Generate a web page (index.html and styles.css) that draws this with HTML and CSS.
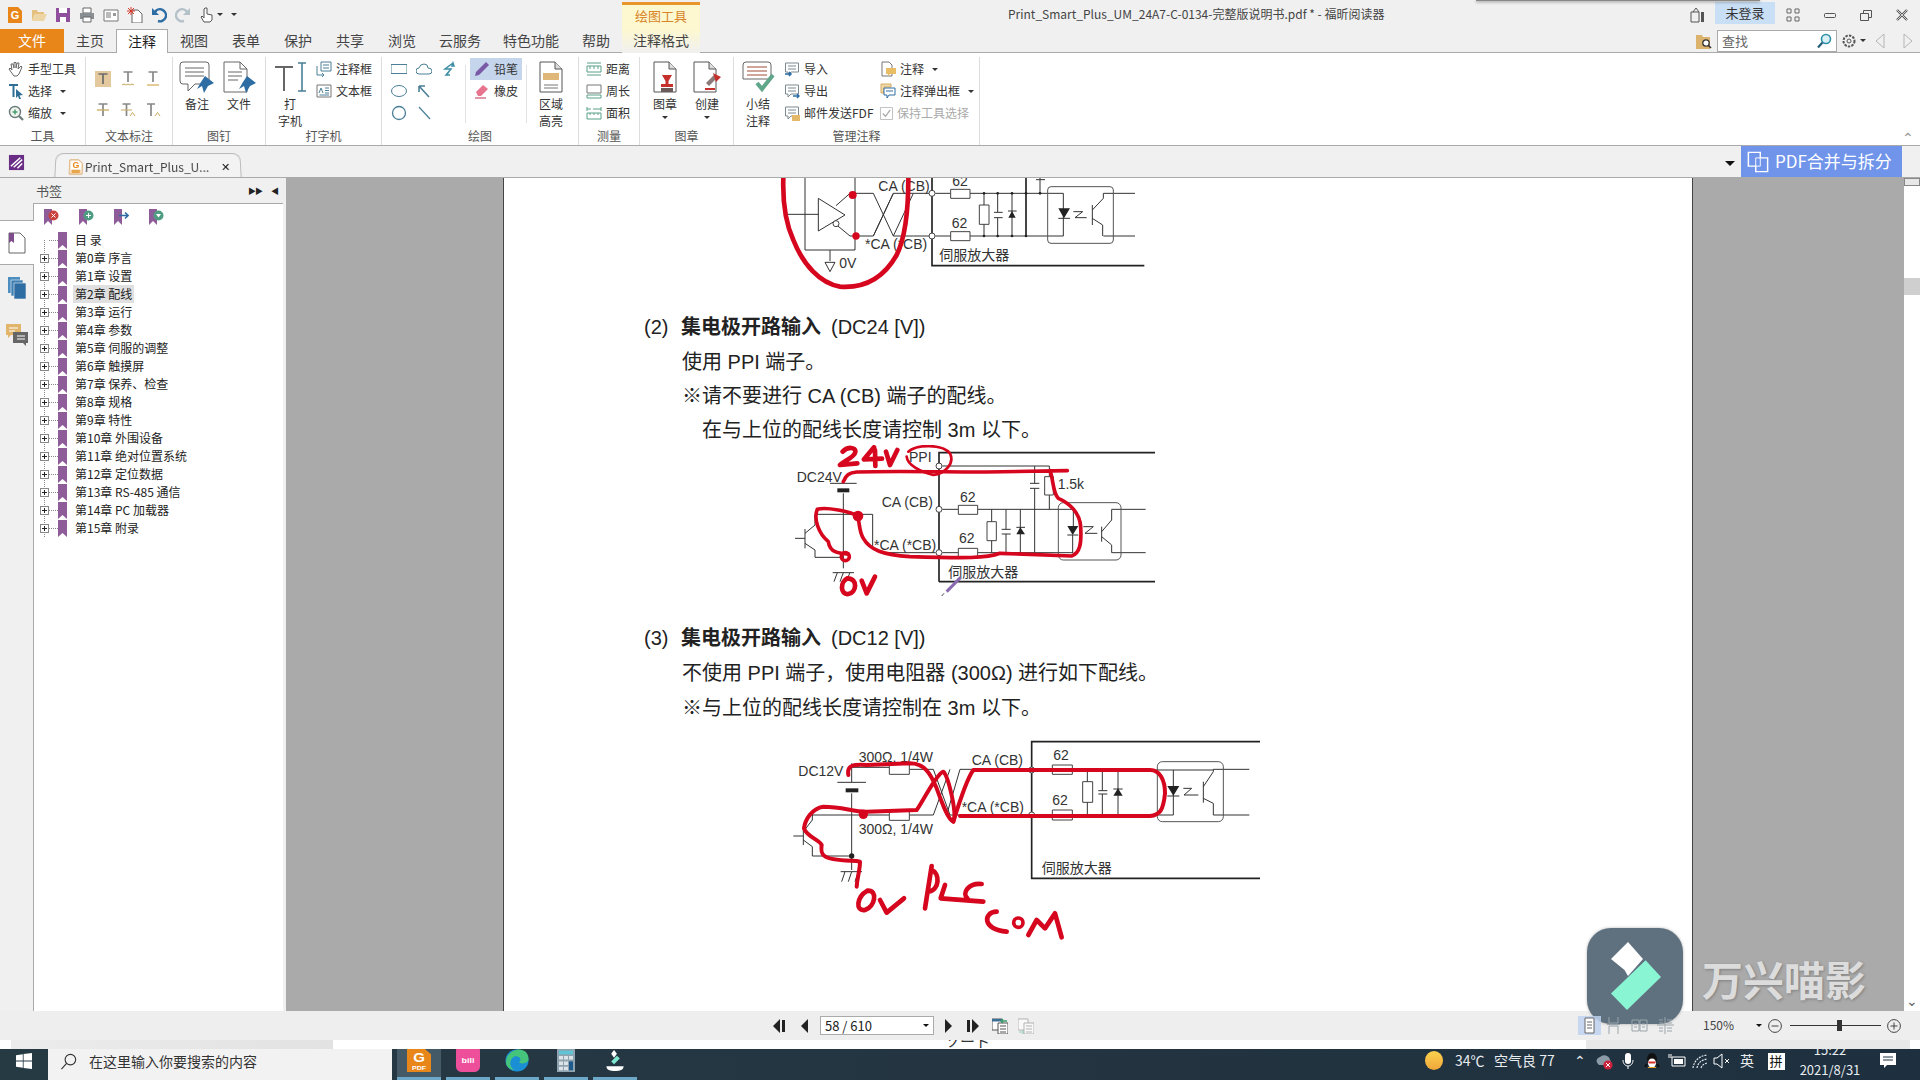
FILE: index.html
```html
<!DOCTYPE html>
<html lang="zh-CN">
<head>
  <meta charset="UTF-8">
  <title>Print_Smart_Plus_UM - 福昕阅读器</title>
  <link rel="stylesheet" href="styles.css">
</head>
<body>
  <svg class="defs" width="0" height="0">
    <symbol id="bm" viewBox="0 0 9 17"><path d="M0 0H9V17L4.5 13 0 17Z" fill="#8f5c9a"/></symbol>
    <symbol id="doc" viewBox="0 0 24 32"><path d="M1 1H16L23 8V31H1Z" fill="#fff" stroke="#555"/><path d="M16 1V8H23" fill="#ddd" stroke="#555"/></symbol>
    <symbol id="note" viewBox="0 0 16 16"><path d="M1.5 2H14.5V11H7L4 14V11H1.5Z" fill="#fff" stroke="#7b8a90"/><path d="M4 5H12M4 8H12" stroke="#7b8a90"/></symbol>
  </svg>

  <!-- title bar -->
  <header class="titlebar">
    <div class="quick">
      <svg class="ic" viewBox="0 0 16 16"><path d="M1 0H11L15 4V16H1Z" fill="#e8861a"/><text x="8" y="12" class="ic-g">G</text></svg>
      <svg class="ic" viewBox="0 0 16 16"><path d="M1 3H6L7 5H13V7H4L1 14Z" fill="#e5c181"/><path d="M4 7H16L13 14H1Z" fill="#edd5a6"/></svg>
      <svg class="ic" viewBox="0 0 16 16"><path d="M1 1H15V15H1Z" fill="#8f4f9c"/><path d="M4 1H12V6H4ZM5 10H11V15H5Z" fill="#fff"/></svg>
      <svg class="ic" viewBox="0 0 16 16"><path d="M4 1H12V6H4Z" fill="#fff" stroke="#666"/><path d="M1 6H15V12H1Z" fill="#8a8f93"/><path d="M4 10H12V15H4Z" fill="#fff" stroke="#666"/></svg>
      <svg class="ic" viewBox="0 0 16 16"><path d="M1 3H15V14H1Z" fill="#fff" stroke="#777"/><path d="M3 6H8M3 8H8M3 10H8" stroke="#777"/><path d="M10 6H13V9H10Z" fill="#999"/></svg>
      <svg class="ic" viewBox="0 0 16 16"><path d="M5 3H11L15 7V16H5Z" fill="#fff" stroke="#666"/><path d="M4 0V8M0 4H8M1 1L7 7M7 1L1 7" stroke="#d23a2c"/></svg>
      <svg class="ic" viewBox="0 0 16 16"><path d="M4 5A6 6 0 1 1 7 14" fill="none" stroke="#2d6da3" stroke-width="2.4"/><path d="M1 1V8H8Z" fill="#2d6da3"/></svg>
      <svg class="ic" viewBox="0 0 16 16"><path d="M12 5A6 6 0 1 0 9 14" fill="none" stroke="#b4c1c9" stroke-width="2.4"/><path d="M15 1V8H8Z" fill="#b4c1c9"/></svg>
      <svg class="ic" viewBox="0 0 16 16"><path d="M6 1H8V7L13 8V13L11 15H5L2 10 3 9 5 11V2Z" fill="#fff" stroke="#555"/></svg>
      <span class="caret caret-q"></span>
      <span class="caret caret-b"></span>
    </div>
    <div class="ctx-head">绘图工具</div>
    <div class="doc-title">Print_Smart_Plus_UM_24A7-C-0134-完整版说明书.pdf * - 福昕阅读器</div>
    <div class="win-btns">
      <svg class="ic bag" viewBox="0 0 16 16"><path d="M2 5H10V15H2Z" fill="none" stroke="#555"/><path d="M4 5L7 1 10 5" fill="none" stroke="#555"/><path d="M12 5H15V15H12Z" fill="#555"/></svg>
      <span class="login">未登录</span>
      <svg class="ic grid-btn" viewBox="0 0 16 16"><path d="M2 2H6V6H2ZM10 2H14V6H10ZM2 10H6V14H2ZM10 10H14V14H10Z" fill="none" stroke="#666"/></svg>
      <svg class="ic win" viewBox="0 0 16 16"><rect x="2.5" y="6.5" width="11" height="4" rx="1" fill="none" stroke="#555"/></svg>
      <svg class="ic win" viewBox="0 0 16 16"><path d="M5.5 3.5H13.5V10.5H5.5Z" fill="none" stroke="#555"/><path d="M2.5 6.5H10.5V13.5H2.5Z" fill="#f0f0f0" stroke="#555"/></svg>
      <svg class="ic win" viewBox="0 0 16 16"><path d="M3 3L13 13M13 3L3 13" stroke="#555" stroke-width="2.4"/><path d="M3 3L13 13M13 3L3 13" stroke="#f0f0f0" stroke-width=".8"/></svg>
    </div>
  </header>

  <!-- menu tabs -->
  <nav class="tabs">
    <span class="tab tab-file">文件</span>
    <span class="tab">主页</span>
    <span class="tab tab-on">注释</span>
    <span class="tab">视图</span>
    <span class="tab">表单</span>
    <span class="tab">保护</span>
    <span class="tab">共享</span>
    <span class="tab">浏览</span>
    <span class="tab tab-3">云服务</span>
    <span class="tab tab-4">特色功能</span>
    <span class="tab">帮助</span>
    <span class="tab tab-ctx">注释格式</span>
    <div class="search-wrap">
      <svg class="ic" viewBox="0 0 16 16"><path d="M0 2H6L7 4H14V16H0Z" fill="#dcb36c"/><circle cx="10" cy="10" r="3.2" fill="#fff" stroke="#333" stroke-width="1.3"/><path d="M12 12L15 15" stroke="#333" stroke-width="1.6"/></svg>
      <div class="search"><span>查找</span>
        <svg class="ic" viewBox="0 0 16 16"><circle cx="10" cy="6" r="4.5" fill="#d9f0f5" stroke="#2f8fa8" stroke-width="1.6"/><path d="M6.5 9.5L2 14.5" stroke="#24607a" stroke-width="2.2"/></svg>
      </div>
      <svg class="ic gear" viewBox="0 0 16 16"><circle cx="8" cy="8" r="5.5" fill="none" stroke="#555" stroke-dasharray="2.4 1.2" stroke-width="2"/><circle cx="8" cy="8" r="2" fill="none" stroke="#555"/></svg>
      <span class="caret"></span>
      <svg class="ic tri" viewBox="0 0 16 16"><path d="M12 1L4 8 12 15Z" fill="none" stroke="#b5b5b5"/></svg>
      <svg class="ic tri" viewBox="0 0 16 16"><path d="M4 1L12 8 4 15Z" fill="none" stroke="#b5b5b5"/></svg>
    </div>
  </nav>

  <!-- ribbon -->
  <section class="ribbon">
    <div class="group g-tools">
      <div class="body rows">
        <div class="row"><svg class="ic" viewBox="0 0 16 16"><path d="M4 9L3 3 5 3 6 7 6 1.5H8V7L9 2H11L10 8 13 5 14 6 11 13 9 15H6L3 11 1 8 2 7Z" fill="#fff" stroke="#666"/></svg>手型工具</div>
        <div class="row"><svg class="ic" viewBox="0 0 16 16"><path d="M1 1H10V3H6.5V14H4.5V3H1Z" fill="#2f6f96"/><path d="M8 6L15 12 11.5 12.5 13 16 11 16 10 13 8 15Z" fill="#2f6f96"/></svg>选择<span class="caret"></span></div>
        <div class="row"><svg class="ic" viewBox="0 0 16 16"><circle cx="7" cy="7" r="5.5" fill="#eef5ee" stroke="#6b7a78" stroke-width="1.4"/><path d="M7 4.5V9.5M4.5 7H9.5" stroke="#4b9c72" stroke-width="1.5"/><path d="M11 11L15 15" stroke="#6b7a78" stroke-width="2.2"/></svg>缩放<span class="caret"></span></div>
      </div>
      <div class="label">工具</div>
    </div>

    <div class="group g-mark">
      <div class="body mark-grid">
        <svg class="ic ic-hl" viewBox="0 0 16 16"><path d="M0 0H16V16H0Z" fill="#e5c99e"/><path d="M3.5 3H12.5M8 3V13" stroke="#6c6c6c" stroke-width="1.7"/></svg>
        <svg class="ic" viewBox="0 0 16 16"><path d="M3.5 1H12.5M8 1V11" stroke="#888" stroke-width="1.7"/><path d="M2 14L4 13 6 14 8 13 10 14 12 13 14 14" fill="none" stroke="#c9a95e"/></svg>
        <svg class="ic" viewBox="0 0 16 16"><path d="M3.5 1H12.5M8 1V11" stroke="#888" stroke-width="1.7"/><path d="M2 14H14" stroke="#d6b15c" stroke-width="1.3"/></svg>
        <svg class="ic" viewBox="0 0 16 16"><path d="M3.5 2H12.5M8 2V14" stroke="#888" stroke-width="1.7"/><path d="M2 8H14" stroke="#c9a95e" stroke-width="1.3"/></svg>
        <svg class="ic" viewBox="0 0 16 16"><path d="M2.5 2H10.5M6.5 2V14" stroke="#888" stroke-width="1.7"/><path d="M1 8H12" stroke="#c9a95e"/><path d="M10 14L12.5 10.5 15 14" fill="none" stroke="#c9a95e"/></svg>
        <svg class="ic" viewBox="0 0 16 16"><path d="M2 2H10M6 2V14" stroke="#888" stroke-width="1.7"/><path d="M10 14L12.5 10.5 15 14" fill="none" stroke="#c9a95e"/></svg>
      </div>
      <div class="label">文本标注</div>
    </div>

    <div class="group g-pin">
      <div class="body cols">
        <div class="big w42">
          <svg class="big-ic" viewBox="0 0 36 32"><path d="M4 1H27Q30 1 30 4V20Q30 23 27 23H16L9 30V23H4Q1 23 1 20V4Q1 1 4 1Z" fill="#fff" stroke="#666"/><path d="M6 7H25M6 11H25M6 15H25" stroke="#666"/><path d="M26 15L35 22 29 25 25 32 23 25 18 28 22 21Z" fill="#2d6da3"/></svg>
          <span>备注</span>
        </div>
        <div class="big w42">
          <svg class="big-ic" viewBox="0 0 36 32"><path d="M3 1H19L26 8V31H3Z" fill="#fff" stroke="#666"/><path d="M19 1V8H26" fill="none" stroke="#666"/><path d="M7 11H21M7 15H21M7 19H17" stroke="#666"/><path d="M26 15L35 22 29 25 25 32 23 25 18 28 22 21Z" fill="#2d6da3"/></svg>
          <span>文件</span>
        </div>
      </div>
      <div class="label">图钉</div>
    </div>

    <div class="group g-type">
      <div class="body cols">
        <div class="big w48">
          <svg class="big-ic" viewBox="0 0 36 32"><path d="M3 6H21M12 6V30" stroke="#666" stroke-width="2"/><path d="M26 2H34M26 30H34M30 2V30" stroke="#4b7f97" stroke-width="1.6"/></svg>
          <span>打</span><span>字机</span>
        </div>
        <div class="rows col-type">
          <div class="row"><svg class="ic" viewBox="0 0 16 16"><path d="M5 1H15V10H5Z" fill="#fff" stroke="#4b7f97"/><path d="M7 4H13M7 7H13" stroke="#4b7f97"/><path d="M1 5V14H8M6 12L8 14 6 16" fill="none" stroke="#4b7f97"/></svg>注释框</div>
          <div class="row"><svg class="ic" viewBox="0 0 16 16"><path d="M1 2H15V14H1Z" fill="#fff" stroke="#777"/><path d="M3 10L5 5 7 10M9 5H13M9 7.5H13M9 10H13M3.5 12H13" fill="none" stroke="#4b7f97"/></svg>文本框</div>
        </div>
      </div>
      <div class="label">打字机</div>
    </div>

    <div class="group g-draw">
      <div class="body cols">
        <div class="shape-grid">
          <svg class="ic" viewBox="0 0 16 16"><path d="M0 3.5H16V12.5H0Z" fill="#fff" stroke="#4b7f97"/></svg>
          <svg class="ic" viewBox="0 0 16 16"><path d="M3 13Q0 13 0 10 0 7 3 7 4 3 8 3 12 3 12 7 16 7 16 10 16 13 13 13Z" fill="#fff" stroke="#4b7f97"/></svg>
          <svg class="ic" viewBox="0 0 16 16"><path d="M12 2L4 8H10L5 14M8 11L5 14 9 14M12 2L11 5 13 5Z" fill="none" stroke="#3f8fa5" stroke-width="1.5"/></svg>
          <svg class="ic" viewBox="0 0 16 16"><ellipse cx="8" cy="8" rx="7.5" ry="5.5" fill="#fff" stroke="#4b7f97"/></svg>
          <svg class="ic" viewBox="0 0 16 16"><path d="M13 14L3 3M3 3H9M3 3V9" fill="none" stroke="#4b7f97" stroke-width="1.6"/></svg>
          <span></span>
          <svg class="ic" viewBox="0 0 16 16"><circle cx="8" cy="8" r="6.5" fill="#fff" stroke="#4b7f97" stroke-width="1.3"/></svg>
          <svg class="ic" viewBox="0 0 16 16"><path d="M3 2L14 14" stroke="#4b7f97" stroke-width="1.2"/></svg>
        </div>
        <div class="vsep"></div>
        <div class="rows col-pen">
          <div class="row row-on"><svg class="ic" viewBox="0 0 16 16"><path d="M2 11L12 1 15 4 5 14 1 15Z" fill="#7a5aa6"/></svg>铅笔</div>
          <div class="row"><svg class="ic" viewBox="0 0 16 16"><path d="M2 9L9 2 14 6 7 13H4Z" fill="#e8738e"/><path d="M1 15H12" stroke="#c9516d" stroke-width="1.2"/></svg>橡皮</div>
        </div>
        <div class="vsep vsep-r"></div>
        <div class="big w48">
          <svg class="big-ic" viewBox="0 0 24 32"><use href="#doc"/><path d="M4 12H20V19H4Z" fill="#dfb879"/><path d="M5 24H19M5 27H19" stroke="#777"/></svg>
          <span>区域</span><span>高亮</span>
        </div>
      </div>
      <div class="label">绘图</div>
    </div>

    <div class="group g-meas">
      <div class="body rows">
        <div class="row"><svg class="ic" viewBox="0 0 16 16"><path d="M1 5H15V11H1Z" fill="#fff" stroke="#5aa089"/><path d="M1 2H15M1 14H15M4 5V8M8 5V8M12 5V8" stroke="#5aa089"/></svg>距离</div>
        <div class="row"><svg class="ic" viewBox="0 0 16 16"><path d="M1 2H15V10H1Z" fill="#fff" stroke="#777"/><path d="M1 12H15V15H1Z" fill="#fff" stroke="#5aa089"/></svg>周长</div>
        <div class="row"><svg class="ic" viewBox="0 0 16 16"><path d="M1 8H15V14H1Z" fill="#fff" stroke="#5aa089"/><path d="M1 4H5M7 4H15M1 2V6M15 2V6M4 8V10M8 8V10M12 8V10" stroke="#5aa089"/></svg>面积</div>
      </div>
      <div class="label">测量</div>
    </div>

    <div class="group g-stamp">
      <div class="body cols">
        <div class="big w42">
          <svg class="big-ic" viewBox="0 0 24 32"><use href="#doc"/><path d="M9 14H19L15.5 20V23H20V26H8V23H12.5V20Z" fill="#c52f2c"/><path d="M8 27H20V31H8Z" fill="#6b5b58"/></svg>
          <span>图章</span><span class="caret caret-big"></span>
        </div>
        <div class="big w42">
          <svg class="big-ic" viewBox="0 0 30 32"><g transform="translate(1)"><use href="#doc" width="24" height="32"/></g><path d="M14 22L22 14 25 17 17 25Z" fill="#8c7a78"/><path d="M21 12L29 16 24 21Z" fill="#c52f2c"/><path d="M13 28H23" stroke="#c52f2c" stroke-width="2"/></svg>
          <span>创建</span><span class="caret caret-big"></span>
        </div>
      </div>
      <div class="label">图章</div>
    </div>

    <div class="group g-manage">
      <div class="body cols">
        <div class="big w48">
          <svg class="big-ic" viewBox="0 0 32 32"><path d="M4 1H26Q29 1 29 4V18H1V4Q1 1 4 1Z" fill="#fff" stroke="#666"/><path d="M5 6H25M5 10H25M5 14H25" stroke="#a04a38"/><path d="M15 22L20 28 31 14" fill="none" stroke="#5fa68a" stroke-width="4"/></svg>
          <span>小结</span><span>注释</span>
        </div>
        <div class="rows col-io">
          <div class="row"><svg class="ic" viewBox="0 0 16 16"><use href="#note"/><path d="M1 13H7M5 11L7 13 5 15" fill="none" stroke="#2d6da3" stroke-width="1.5"/></svg>导入</div>
          <div class="row"><svg class="ic" viewBox="0 0 16 16"><use href="#note"/><path d="M9 13H15M13 11L15 13 13 15" fill="none" stroke="#2d6da3" stroke-width="1.5"/></svg>导出</div>
          <div class="row"><svg class="ic" viewBox="0 0 16 16"><use href="#note"/><path d="M8 10H16V16H8Z" fill="#e3b868"/></svg>邮件发送FDF</div>
        </div>
        <div class="rows col-note">
          <div class="row"><svg class="ic" viewBox="0 0 16 16"><path d="M2 1H9L12 4V15H2Z" fill="#fff" stroke="#777"/><path d="M6 7H16V13H10L8 15V13H6Z" fill="#e9bd64"/></svg>注释<span class="caret"></span></div>
          <div class="row"><svg class="ic" viewBox="0 0 16 16"><path d="M1 1H11V4H4V10H1Z" fill="#f0d9a8" stroke="#d3ad62"/><path d="M4 5H15V12H9L7 15V12H4Z" fill="#fff" stroke="#2d6da3"/><path d="M6 8H13" stroke="#2d6da3"/></svg>注释弹出框<span class="caret"></span></div>
          <div class="row row-off"><svg class="ic ic-chk" viewBox="0 0 14 14"><path d="M.5.5H13.5V13.5H.5Z" fill="#fff" stroke="#bbb"/><path d="M3 7L6 10 11 3" fill="none" stroke="#aaa" stroke-width="1.4"/></svg>保持工具选择</div>
        </div>
      </div>
      <div class="label">管理注释</div>
    </div>
    <span class="chev-up">&#8963;</span>
  </section>

  <!-- document tab strip -->
  <div class="docstrip">
    <svg class="ic sign" viewBox="0 0 18 18"><path d="M1 1H17V17H1Z" fill="#6a2d86"/><path d="M3 13L13 4M6 14L15 6M10 15L15 10" stroke="#fff" stroke-width="1.6"/></svg>
    <div class="doctab">
      <svg class="ic" viewBox="0 0 16 18"><path d="M1 1H11L15 5V17H1Z" fill="#fff" stroke="#d69a4a"/><path d="M3 12H13V16H3Z" fill="#e8a64a"/><text x="8" y="10" class="ic-g ic-g-o">G</text></svg>
      <span class="doctab-name">Print_Smart_Plus_U...</span>
      <span class="doctab-x">✕</span>
    </div>
    <span class="caret caret-blk"></span>
    <div class="merge">
      <svg class="merge-ic" viewBox="0 0 24 24"><path d="M1.5 1.5H14.5V7.5H22.5V22.5H9.5V16.5H1.5Z" fill="none" stroke="#fff" stroke-width="1.6"/><path d="M9.5 7.5H14.5V16.5H9.5Z" fill="none" stroke="#fff"/></svg>
      PDF合并与拆分
    </div>
  </div>

  <!-- main area -->
  <main class="main">
    <aside class="rail">
      <div class="rail-tab">
        <svg class="rail-ic" viewBox="0 0 18 22"><path d="M1 1H12L17 6V21H1Z" fill="#fff" stroke="#666"/><path d="M1 1H6V11L3.5 9 1 11Z" fill="#7d4d8c"/></svg>
      </div>
      <svg class="rail-ic rail-pages" viewBox="0 0 18 22"><path d="M0 0H12V16H0Z" fill="#4d8ec0"/><path d="M3 3H15V19H3Z" fill="#3f80b5" stroke="#f0f0f0" stroke-width=".6"/><path d="M6 6H18V22H6Z" fill="#2d6da3" stroke="#f0f0f0" stroke-width=".6"/></svg>
      <svg class="rail-ic rail-notes" viewBox="0 0 22 22"><path d="M0 0H15V11H5L2 14V11H0Z" fill="#e2b56c"/><path d="M3 4H12M3 7H9" stroke="#fff"/><path d="M7 8H22V19H20V22L17 19H7Z" fill="#666"/><path d="M11 12H19M11 15H19" stroke="#fff"/></svg>
    </aside>

    <div class="bookmarks">
      <div class="bm-head"><span>书签</span><span class="bm-ctrl"><span>&#9654;&#9654;</span><span>&#9664;</span></span></div>
      <div class="bm-panel">
        <div class="bm-tools">
          <svg class="ic" viewBox="0 0 16 16"><path d="M1 0H9V16L5 12 1 16Z" fill="#8f5c9a"/><circle cx="10.5" cy="6.5" r="5" fill="#c9443e"/><path d="M8.5 4.5L12.5 8.5M12.5 4.5L8.5 8.5" stroke="#fff"/></svg>
          <svg class="ic" viewBox="0 0 16 16"><path d="M1 0H9V16L5 12 1 16Z" fill="#8f5c9a"/><circle cx="10.5" cy="6.5" r="5" fill="#4e9d82"/><path d="M10.5 4V9M8 6.5H13" stroke="#fff"/></svg>
          <svg class="ic" viewBox="0 0 16 16"><path d="M1 0H9V16L5 12 1 16Z" fill="#8f5c9a"/><path d="M6 6.5H15M12 3.5L15 6.5 12 9.5" fill="none" stroke="#2d6da3" stroke-width="1.6"/></svg>
          <svg class="ic" viewBox="0 0 16 16"><path d="M1 0H9V16L5 12 1 16Z" fill="#8f5c9a"/><circle cx="10.5" cy="6.5" r="5" fill="#4e9d82"/><path d="M8 5H13L10.5 8.5Z" fill="#fff"/></svg>
        </div>
        <ul class="tree">
          <li class="node"><span class="plus plus-none"></span><svg class="bm"><use href="#bm"/></svg><span class="node-t">目 录</span></li>
          <li class="node"><span class="plus"></span><svg class="bm"><use href="#bm"/></svg><span class="node-t">第0章 序言</span></li>
          <li class="node"><span class="plus"></span><svg class="bm"><use href="#bm"/></svg><span class="node-t">第1章 设置</span></li>
          <li class="node"><span class="plus"></span><svg class="bm"><use href="#bm"/></svg><span class="node-t node-sel">第2章 配线</span></li>
          <li class="node"><span class="plus"></span><svg class="bm"><use href="#bm"/></svg><span class="node-t">第3章 运行</span></li>
          <li class="node"><span class="plus"></span><svg class="bm"><use href="#bm"/></svg><span class="node-t">第4章 参数</span></li>
          <li class="node"><span class="plus"></span><svg class="bm"><use href="#bm"/></svg><span class="node-t">第5章 伺服的调整</span></li>
          <li class="node"><span class="plus"></span><svg class="bm"><use href="#bm"/></svg><span class="node-t">第6章 触摸屏</span></li>
          <li class="node"><span class="plus"></span><svg class="bm"><use href="#bm"/></svg><span class="node-t">第7章 保养、检查</span></li>
          <li class="node"><span class="plus"></span><svg class="bm"><use href="#bm"/></svg><span class="node-t">第8章 规格</span></li>
          <li class="node"><span class="plus"></span><svg class="bm"><use href="#bm"/></svg><span class="node-t">第9章 特性</span></li>
          <li class="node"><span class="plus"></span><svg class="bm"><use href="#bm"/></svg><span class="node-t">第10章 外围设备</span></li>
          <li class="node"><span class="plus"></span><svg class="bm"><use href="#bm"/></svg><span class="node-t">第11章 绝对位置系统</span></li>
          <li class="node"><span class="plus"></span><svg class="bm"><use href="#bm"/></svg><span class="node-t">第12章 定位数据</span></li>
          <li class="node"><span class="plus"></span><svg class="bm"><use href="#bm"/></svg><span class="node-t">第13章 RS-485 通信</span></li>
          <li class="node"><span class="plus"></span><svg class="bm"><use href="#bm"/></svg><span class="node-t">第14章 PC 加载器</span></li>
          <li class="node"><span class="plus"></span><svg class="bm"><use href="#bm"/></svg><span class="node-t">第15章 附录</span></li>
        </ul>
      </div>
    </div>

    <div class="viewer">
      <article class="page">
        <!-- diagram 1, drawn in crop coordinates -->
        <svg class="dia d1" viewBox="0 9 1380 351">
          <g class="wire">
            <path d="M195 9V225H345V9M140 118H235M235 70L315 120 235 168ZM288 92L330 55H400L460 183H520L575 183M290 150L330 183H400L460 55H520L575 55M400 183L460 55M460 183L520 55M270 225V258M255 262H285L270 290Z"/>
            <circle cx="288" cy="146" r="9" class="hole"/>
            <path d="M586 55H632M690 55H970M586 183H632M690 183H970M1090 55H1185M1090 183H1185"/>
            <path d="M632 43H690V70H632ZM632 170H690V197H632ZM718 90H747V148H718Z" class="hole"/>
            <path d="M732 55V90M732 148V183M773 55V112M762 112H788M762 128H788M773 128V183M816 55V183M804 108H830M900 9V55M888 14H915"/>
            <path d="M970 55V183M955 130H990M1057 90V150M1057 105L1090 70V55M1057 130L1088 150V183M1000 110H1028L1005 128H1040"/>
            <rect x="923" y="35" width="197" height="170" rx="10" class="hole-n"/>
          </g>
          <path d="M805 128H827L816 108ZM955 100H990L972 130Z" class="solid"/>
          <g class="solid"><circle cx="732" cy="55" r="4"/><circle cx="773" cy="55" r="4"/><circle cx="816" cy="55" r="4"/><circle cx="858" cy="55" r="4"/><circle cx="900" cy="55" r="4"/><circle cx="732" cy="183" r="4"/><circle cx="773" cy="183" r="4"/><circle cx="816" cy="183" r="4"/><circle cx="858" cy="183" r="4"/></g>
          <path d="M576 9V272H1213M858 9V183" class="thick"/>
          <circle cx="576" cy="55" r="9" class="hole"/><circle cx="576" cy="183" r="9" class="hole"/>
          <text x="298" y="278" class="t3">0V</text>
          <text x="415" y="48" class="t3">CA (CB)</text>
          <text x="375" y="222" class="t3">*CA (*CB)</text>
          <text x="637" y="33" class="t3">62</text>
          <text x="635" y="158" class="t3">62</text>
          <text x="598" y="255" class="t3">伺服放大器</text>
          <path d="M130 9C128 70 135 140 160 195 190 270 240 325 300 335 370 340 430 310 470 240 495 190 505 110 505 9" class="ink ink-b"/>
          <circle cx="338" cy="60" r="12" class="ink-dot"/><circle cx="348" cy="183" r="11" class="ink-dot"/>
        </svg>

        <p class="ln head"><span class="num">(2)</span><b>集电极开路输入</b>(DC24 [V])</p>
        <p class="ln ln-a">使用 PPI 端子。</p>
        <p class="ln">※请不要进行 CA (CB) 端子的配线。</p>
        <p class="ln ln-in">在与上位的配线长度请控制 3m 以下。</p>

        <!-- diagram 2 -->
        <svg class="dia d2" viewBox="0 45 1260 495">
          <g class="wire">
            <path d="M547 108H868V140M868 195V238M824 108V160M810 160H838M810 175H838M824 175V368M547 238H595M653 238H940V288M922 315H955M938 315V368M547 368H595M653 368H940M1055 238H1157M1055 368H1157"/>
            <path d="M595 226H653V253H595ZM595 355H653V382H595ZM854 140H880V195H854ZM681 275H709V332H681Z" class="hole"/>
            <path d="M695 238V275M695 332V368M738 238V298M725 298H752M725 312H752M738 312V368M781 238V368M769 292H795"/>
            <path d="M1025 290V335M1025 305L1055 270V238M1025 320L1055 345V368M970 290H1000L975 310H1012"/>
            <rect x="895" y="218" width="188" height="172" rx="15" class="hole-n"/>
            <path d="M210 160H290M250 190V415M338 253H170M338 253V355M135 297V355M105 325H135M135 310L165 285V253M135 340L165 360V382H250M338 355L360 368H527M218 428H282M232 428L222 455M250 428L240 455M270 428L258 455"/>
          </g>
          <path d="M769 313H795L781 292ZM922 288H955L938 315Z" class="solid"/>
          <path d="M232 181H268" class="batt"/>
          <path d="M537 455V68H1185M537 455H1185" class="thick"/>
          <circle cx="537" cy="108" r="9" class="hole"/><circle cx="537" cy="238" r="9" class="hole"/><circle cx="537" cy="368" r="9" class="hole"/>
          <text x="447" y="95" class="t3">PPI</text>
          <text x="110" y="155" class="t3">DC24V</text>
          <text x="365" y="230" class="t3">CA (CB)</text>
          <text x="342" y="360" class="t3">*CA (*CB)</text>
          <text x="600" y="215" class="t3">62</text>
          <text x="597" y="340" class="t3">62</text>
          <text x="893" y="178" class="t3">1.5k</text>
          <text x="565" y="442" class="t3">伺服放大器</text>
          <path d="M248 65C262 50 288 50 286 66 284 82 250 94 240 105L292 100M342 52L312 88 366 86M345 60L346 108M378 65L390 105 412 60" class="ink ink-b"/>
          <path d="M445 65C470 42 548 42 570 70 585 100 555 130 520 135 480 125 442 105 440 80" class="ink ink-m"/>
          <path d="M250 155C258 135 268 128 290 126 400 122 560 126 680 126L922 122M870 122C880 145 878 190 895 205 930 220 960 250 962 290 965 340 960 370 935 378L720 370C680 385 620 385 450 380 370 375 330 360 310 325 295 300 300 272 292 262" class="ink"/>
          <path d="M295 258C270 245 200 230 172 238 160 265 175 310 205 335 210 370 240 370 265 372" class="ink"/>
          <circle cx="294" cy="258" r="16" class="ink-dot"/>
          <circle cx="256" cy="380" r="12" class="ink-ring"/>
          <path d="M262 445C240 455 240 495 265 492 290 488 295 445 262 445M305 452L320 490 345 440" class="ink ink-b"/>
          <path d="M602 442L560 485" class="pen"/><path d="M552 490L545 498" class="pen-tip"/>
        </svg>

        <p class="ln head h3"><span class="num">(3)</span><b>集电极开路输入</b>(DC12 [V])</p>
        <p class="ln ln-a">不使用 PPI 端子，使用电阻器 (300Ω) 进行如下配线。</p>
        <p class="ln ln-2">※与上位的配线长度请控制在 3m 以下。</p>

        <!-- diagram 3 -->
        <svg class="dia d3" viewBox="0 0 1500 660">
          <g class="wire">
            <path d="M215 112H328M388 118H460L510 255H530M500 255L540 118H755M215 255H328M388 255H460L510 118M95 255H215M530 255H755"/>
            <path d="M765 120H817M877 120H1300M765 255H817M877 255H1180M1300 118H1408M1300 255H1408"/>
            <path d="M328 103H388V133H328ZM328 243H388V271H328ZM817 105H877V133H817ZM817 240H877V270H817ZM908 155H938V217H908Z" class="hole"/>
            <path d="M922 120V155M922 217V255M967 120V182M955 182H982M955 192H982M967 192V255M1014 120V255M1000 177H1028M1180 120V255M1162 198H1198"/>
            <path d="M1270 155V218M1270 170L1300 125V118M1270 205L1300 220V255M1210 175H1235L1212 195H1255"/>
            <rect x="1132" y="95" width="198" height="180" rx="15" class="hole-n"/>
            <path d="M172 157H258M215 100V157M215 190V420M70 290V345M40 318H70M70 305L97 270V255M70 330L97 350V378H215M182 425H246M195 425L185 455M215 425L205 455M235 425L225 455"/>
          </g>
          <path d="M1000 197H1028L1014 175ZM1162 168H1198L1180 197Z" class="solid"/>
          <circle cx="215" cy="378" r="8" class="solid"/>
          <path d="M197 181H235" class="batt"/>
          <path d="M1440 35H755V445H1440" class="thick"/>
          <circle cx="755" cy="120" r="9" class="hole"/><circle cx="755" cy="255" r="9" class="hole"/>
          <text x="55" y="138" class="t3">DC12V</text>
          <text x="236" y="95" class="t3">300Ω, 1/4W</text>
          <text x="236" y="313" class="t3">300Ω, 1/4W</text>
          <text x="575" y="106" class="t3">CA (CB)</text>
          <text x="545" y="245" class="t3">*CA (*CB)</text>
          <text x="820" y="90" class="t3">62</text>
          <text x="817" y="226" class="t3">62</text>
          <text x="785" y="430" class="t3">伺服放大器</text>
          <path d="M205 135C200 105 220 103 260 105L390 100C430 100 450 125 470 175 490 230 505 270 520 275 532 250 505 140 490 125 470 130 420 230 410 240L260 245C215 245 190 230 130 230 95 235 75 270 72 295 80 320 120 330 125 345 120 380 130 390 230 393L240 395C240 420 232 440 230 470" class="ink ink-w"/>
          <path d="M520 275C540 210 565 140 580 120L1110 120C1140 120 1155 150 1155 190 1150 240 1140 255 1110 258L540 258" class="ink ink-w"/>
          <circle cx="250" cy="253" r="14" class="ink-dot"/>
          <path d="M262 482C230 500 225 545 255 540 285 530 295 480 262 482M300 510L320 548 372 505" class="ink ink-b"/>
          <path d="M455 408L435 535M455 420C480 430 480 480 445 485M495 465L482 505 610 515M605 462C565 458 545 490 562 505" class="ink ink-b"/>
          <path d="M650 545C610 545 605 600 680 605" class="ink ink-b"/>
          <circle cx="715" cy="578" r="14" class="ink-ring"/>
          <path d="M745 615L770 570 795 595 825 550 845 622" class="ink ink-b"/>
        </svg>
      </article>
    </div>

    <div class="vscroll">
      <span class="vs-top"></span>
      <span class="vs-thumb"></span>
      <span class="vs-down">&#8964;</span>
    </div>
  </main>

  <!-- status bar -->
  <footer class="status">
    <div class="pager">
      <svg class="ic" viewBox="0 0 16 16"><path d="M9 1V15L2 8Z M11 2H14V14H11Z" fill="#222"/></svg>
      <svg class="ic" viewBox="0 0 16 16"><path d="M11 1V15L4 8Z" fill="#222"/></svg>
      <div class="combo"><span>58 / 610</span><span class="caret caret-blk"></span></div>
      <svg class="ic" viewBox="0 0 16 16"><path d="M5 1V15L12 8Z" fill="#222"/></svg>
      <svg class="ic" viewBox="0 0 16 16"><path d="M7 1V15L14 8ZM2 2H5V14H2Z" fill="#222"/></svg>
      <svg class="ic" viewBox="0 0 16 16"><path d="M0 1H10V12H0Z" fill="#fff" stroke="#555"/><path d="M0 1H10V3.5H0Z" fill="#3a6f96"/><path d="M6 5H16V16H6Z" fill="#fff" stroke="#555"/><path d="M8 8H14M8 11H14M8 14H14" stroke="#555"/><path d="M9 3H15M11 1L9 3 11 5" fill="none" stroke="#3c9c6c" stroke-width="1.4"/></svg>
      <svg class="ic ic-faint" viewBox="0 0 16 16"><path d="M0 1H10V12H0Z" fill="#fff" stroke="#999"/><path d="M6 5H16V16H6Z" fill="#fff" stroke="#999"/><path d="M8 8H14M8 11H14M8 14H14" stroke="#999"/><path d="M1 14H6M4 12L6 14 4 16" fill="none" stroke="#7cc0a0"/></svg>
    </div>
    <div class="zoombar">
      <svg class="vm vm-on" viewBox="0 0 23 19"><path d="M7 2H16V17H7Z" fill="#fff" stroke="#666"/><path d="M9 6H14M9 9H14M9 12H14" stroke="#666"/></svg>
      <svg class="vm" viewBox="0 0 25 19"><path d="M8 1V7H17V1M8 18V10H17V18M6 8.5H19" fill="none" stroke="#9aa4ab"/></svg>
      <svg class="vm" viewBox="0 0 27 19"><path d="M6 4H13V15H6ZM14 4H21V15H14Z" fill="none" stroke="#9aa4ab"/><path d="M8 8H11M16 8H19M8 11H11M16 11H19" stroke="#9aa4ab"/></svg>
      <svg class="vm" viewBox="0 0 25 19"><path d="M12 1V18M4 9H21M6 4H10M6 7H10M14 4H19M14 7H19M6 12H10M6 15H10M14 12H19M14 15H19" fill="none" stroke="#9aa4ab"/></svg>
      <span class="pct">150%</span>
      <span class="caret caret-blk"></span>
      <svg class="ic" viewBox="0 0 14 14"><circle cx="7" cy="7" r="6.4" fill="none" stroke="#444"/><path d="M3.5 7H10.5" stroke="#444"/></svg>
      <div class="slider"><span class="slider-thumb"></span></div>
      <svg class="ic" viewBox="0 0 14 14"><circle cx="7" cy="7" r="6.4" fill="none" stroke="#444"/><path d="M3.5 7H10.5M7 3.5V10.5" stroke="#444"/></svg>
    </div>
  </footer>

  <div class="hscroll">
    <span class="hs-left"></span>
    <span class="hs-cut">ソート</span>
    <span class="hs-right"></span>
  </div>

  <!-- windows taskbar -->
  <footer class="taskbar">
    <div class="start">
      <svg class="win-logo" viewBox="0 0 16 16"><path d="M0 2.2L6.8 1.2V7.6H0ZM7.6 1.1L16 0V7.6H7.6ZM0 8.4H6.8V14.8L0 13.8ZM7.6 8.4H16V16L7.6 14.9Z" fill="#fff"/></svg>
    </div>
    <div class="ts-search">
      <svg class="ts-mag" viewBox="0 0 18 18"><circle cx="11" cy="7" r="5.6" fill="none" stroke="#333" stroke-width="1.2"/><path d="M7 11L1.5 17" stroke="#333" stroke-width="1.2"/></svg>
      在这里输入你要搜索的内容
    </div>
    <div class="apps">
      <div class="app app-on"><svg class="app-ic" viewBox="0 0 24 26" preserveAspectRatio="none"><path d="M0 0H18L24 6V26H0Z" fill="#e8861a"/><text x="12" y="15" class="ic-g ic-g-w">G</text><text x="12" y="24" class="ic-pdf">PDF</text></svg></div>
      <div class="app"><svg class="app-ic" viewBox="0 0 24 26" preserveAspectRatio="none"><rect y="-4" width="24" height="30" rx="6" fill="#ee4f9b"/><text x="12" y="16" class="ic-bili">bili</text></svg></div>
      <div class="app"><svg class="app-ic" viewBox="0 0 24 24" preserveAspectRatio="none"><circle cx="12" cy="12" r="11.5" fill="#1b8fd4"/><path d="M1 14C1 6 8 .5 14 .5 20 .5 24 5 23.5 11 23 15 17 16 14 14 18 10 13 6 9 8 4 11 4 18 9 22 4 21 1 18 1 14Z" fill="#45c47c"/></svg></div>
      <div class="app"><svg class="app-ic calc" viewBox="0 0 18 26" preserveAspectRatio="none"><path d="M0 0H18V26H0Z" fill="#8ea3af"/><path d="M2 2H16V6H2Z" fill="#5fc4d6"/><path d="M2 8H6V12H2ZM7 8H11V12H7ZM12 8H16V12H12ZM2 14H6V18H2ZM7 14H11V18H7ZM2 20H6V24H2ZM7 20H11V24H7Z" fill="#dbe3e8"/><path d="M12 14H16V24H12Z" fill="#1f5a8c"/></svg></div>
      <div class="app"><svg class="app-ic" viewBox="0 0 24 24"><path d="M11 1L14 5 11 9 8 5Z" fill="#fff"/><path d="M14 7L17 10 11 16 8 13Z" fill="#7fe8cf"/><path d="M3 18H21C21 22 17 23 12 23 7 23 3 22 3 18Z" fill="#fff"/></svg></div>
    </div>
    <div class="tray">
      <span class="sun"></span>
      <span>34℃</span>
      <span>空气良 77</span>
      <span class="t-c">&#8963;</span>
      <svg class="t-ic" viewBox="0 0 18 18"><path d="M3 12A4 4 0 0 1 5 5 6 6 0 0 1 15 8 3 3 0 0 1 14 13H4Z" fill="#8a9aa6"/><circle cx="13" cy="13" r="4.6" fill="#c9223a"/><path d="M11 11L15 15M15 11L11 15" stroke="#fff"/></svg>
      <svg class="t-ic" viewBox="0 0 18 18"><rect x="6" y="1" width="6" height="11" rx="3" fill="#fff"/><path d="M4 8C4 16 14 16 14 8M9 14V17" fill="none" stroke="#fff"/></svg>
      <svg class="t-ic" viewBox="0 0 18 18"><ellipse cx="9" cy="7" rx="5" ry="6" fill="#111"/><ellipse cx="9" cy="11" rx="4" ry="4.5" fill="#fff"/><path d="M4 12L2 15M14 12L16 15" stroke="#111" stroke-width="2"/><path d="M5 15H13V16H5Z" fill="#e8a020"/><path d="M5 9.5H13L12 11.5H6Z" fill="#d8342c"/></svg>
      <svg class="t-ic" viewBox="0 0 18 18"><path d="M4 5H17V14H4Z" fill="none" stroke="#fff"/><path d="M6 7H15V12H6Z" fill="#fff"/><path d="M1 2V6M3 2V6" stroke="#fff"/></svg>
      <svg class="t-ic" viewBox="0 0 18 18"><path d="M2 16C3 9 8 4 16 3M6 16C7 11 10 8 16 7M10 16C11 13 13 12 16 11" fill="none" stroke="#dfe5e8" stroke-width="1.2" stroke-dasharray="2 1"/></svg>
      <svg class="t-ic" viewBox="0 0 18 18"><path d="M1 6H4L9 2V16L4 12H1Z" fill="none" stroke="#fff"/><path d="M12 7L16 11M16 7L12 11" stroke="#fff"/></svg>
      <span class="t-c">英</span>
      <span class="t-c"><span class="pin">拼</span></span>
      <div class="clock"><span>15:22</span><span>2021/8/31</span></div>
      <svg class="t-ic notify" viewBox="0 0 18 18"><path d="M1 1H17V13H8L5 16V13H1Z" fill="#fff"/><path d="M4 5H14M4 8H14" stroke="#1f3140"/></svg>
    </div>
  </footer>

  <!-- floating recorder logo -->
  <div class="logo">
    <svg class="logo-ic" viewBox="0 0 96 96"><path d="M41 14L56 31 41 48 37.5 42 24 31Z" fill="#fff"/><path d="M58.6 32.3L74 49 40 82 24 65.6Z" fill="#8af5d3"/></svg>
  </div>
  <div class="mark">万兴喵影</div>
  <div class="topshadow"></div>
</body>
</html>
```

FILE: styles.css
```css
* { box-sizing: border-box; }
html, body { margin: 0; padding: 0; }
body {
  position: relative;
  width: 1920px;
  height: 1080px;
  overflow: hidden;
  display: flex;
  flex-direction: column;
  background: #f0f0f0;
  color: #333;
  font: 12px/1.2 "Noto Sans CJK SC", "Noto Sans", sans-serif;
}
.defs { position: absolute; }
.ic { width: 16px; height: 16px; flex: none; display: block; }
.ic-g { font: bold 11px "Liberation Sans", sans-serif; fill: #fff; text-anchor: middle; }
.ic-g-o { fill: #e8861a; font-size: 10px; }
.ic-g-w { font-size: 15px; }
.ic-pdf { font: bold 7px "Liberation Sans", sans-serif; fill: #fff; text-anchor: middle; }
.ic-bili { font: bold 9px "Liberation Sans", sans-serif; fill: #fff; text-anchor: middle; }
.caret {
  display: inline-block;
  width: 0;
  height: 0;
  border: 3px solid transparent;
  border-top: 3px solid #333;
  border-bottom: 0;
  flex: none;
}
.caret-blk { border-width: 5px 5px 0; border-top-color: #111; }

/* title bar */
.titlebar { height: 29px; display: flex; align-items: center; flex: none; }
.quick { width: 622px; padding-left: 7px; display: flex; align-items: center; gap: 8px; }
.caret-q { margin-left: -6px; }
.caret-b { margin-left: 0; width: 6px; border-top-width: 3px; }
.ctx-head {
  width: 78px;
  height: 27px;
  margin-top: 2px;
  border-top: 3px solid #e8962c;
  background: #fdf8cf;
  color: #d8862a;
  font-size: 13px;
  line-height: 22px;
  text-align: center;
}
.doc-title { margin-left: 308px; font-size: 12px; color: #444; white-space: nowrap; }
.win-btns { margin-left: auto; height: 29px; display: flex; align-items: center; }
.bag { margin-right: 10px; }
.login {
  width: 60px;
  height: 22px;
  background: #c9dff5;
  text-align: center;
  line-height: 22px;
  font-size: 13px;
  margin-bottom: 4px;
  margin-right: 1px;
}
.grid-btn { margin: 0 21px 0 9px; }
.win { margin-right: 20px; }
.win:last-child { margin-right: 10px; }

/* tabs */
.tabs {
  height: 24px;
  flex: none;
  display: flex;
  border-bottom: 1px solid #aaa;
  position: relative;
}
.tab { width: 52px; height: 24px; font-size: 14px; line-height: 22px; text-align: center; color: #444; flex: none; }
.tab-file { width: 64px; background: #e8861a; color: #fff; }
.tab-on {
  background: #fff;
  height: 25px;
  border: 1px solid #aaa;
  border-bottom: 0;
  color: #222;
}
.tab-3 { width: 64px; }
.tab-4 { width: 78px; }
.tab-ctx { width: 78px; background: linear-gradient(#fdf8cf, #f0f0f0); }
.search-wrap { margin-left: auto; display: flex; align-items: center; height: 23px; }
.search {
  width: 120px;
  height: 22px;
  margin-left: 5px;
  border: 1px solid #aaa;
  background: #fff;
  display: flex;
  align-items: center;
  justify-content: space-between;
  padding: 0 4px;
  font-size: 13px;
  color: #666;
}
.gear { margin: 0 3px 0 4px; }
.tri { margin-left: 6px; }
.tri + .tri { margin: 0 4px 0 12px; }

/* ribbon */
.ribbon { height: 93px; flex: none; display: flex; background: #fff; border-bottom: 1px solid #aaa; position: relative; }
.group {
  height: 88px;
  margin-top: 4px;
  flex: none;
  display: flex;
  flex-direction: column;
  border-right: 1px solid #dcdcdc;
}
.body { height: 68px; flex: none; }
.label { height: 20px; text-align: center; color: #555; line-height: 22px; }
.g-tools { width: 86px; }
.g-tools .rows { padding-left: 8px; }
.g-mark { width: 87px; }
.g-pin { width: 93px; }
.g-pin .cols { padding-left: 3px; }
.g-type { width: 116px; }
.g-draw { width: 197px; }
.g-meas { width: 61px; }
.g-meas .rows { padding-left: 7px; }
.g-stamp { width: 94px; }
.g-stamp .cols { padding-left: 4px; }
.g-manage { width: 246px; }
.rows { display: flex; flex-direction: column; padding-top: 1px; }
.row { height: 22px; display: flex; align-items: center; gap: 4px; white-space: nowrap; flex: none; color: #333; }
.row .caret { margin-left: 4px; }
.cols { display: flex; }
.big { display: flex; flex-direction: column; align-items: center; flex: none; line-height: 17px; }
.big > * { flex: none; }
.w42 { width: 42px; }
.w48 { width: 48px; }
.big-ic { width: 36px; height: 32px; margin: 4px 0 2px; display: block; }
.caret-big { margin-top: 4px; }
.mark-grid {
  display: grid;
  grid-template-columns: repeat(3, 25px);
  grid-auto-rows: 31px;
  padding: 6px 0 0 4px;
  justify-items: center;
  align-items: center;
  align-content: start;
}
.shape-grid {
  display: grid;
  grid-template-columns: repeat(3, 25px);
  grid-auto-rows: 22px;
  padding: 1px 0 0 4px;
  justify-items: center;
  align-items: center;
  align-content: start;
  width: 79px;
  flex: none;
}
.col-type { margin-left: 2px; }
.vsep { width: 1px; height: 58px; margin: 8px 4px 0; background: #e2e2e2; flex: none; }
.vsep-r { margin-right: 0; }
.col-pen { width: 52px; flex: none; }
.col-pen .row { padding-left: 4px; }
.row-on { background: #c5d5ec; }
.col-io { width: 96px; margin-left: 2px; flex: none; }
.col-note { flex: none; }
.row-off { color: #aaa; }
.ic-chk { width: 13px; height: 13px; }
.chev-up { position: absolute; right: 6px; bottom: 1px; color: #999; font-size: 14px; line-height: 14px; }

/* doc tab strip */
.docstrip {
  height: 32px;
  flex: none;
  display: flex;
  align-items: flex-end;
  padding-left: 8px;
  border-bottom: 1px solid #aaa;
}
.sign { width: 17px; height: 17px; margin-bottom: 6px; }
.doctab {
  width: 186px;
  height: 24px;
  margin-left: 30px;
  display: flex;
  align-items: center;
  padding: 3px 10px 0 12px;
  background: #f3f3f3;
  border: 1px solid #bbb;
  border-bottom: 0;
  border-radius: 8px 8px 0 0;
  transform: perspective(60px) rotateX(2deg);
}
.doctab-name { margin-left: 1px; font-size: 12px; color: #444; }
.doctab-x { margin-left: auto; font-size: 11px; color: #111; }
.docstrip > .caret { margin: 0 6px 11px auto; }
.merge {
  width: 161px;
  height: 31px;
  margin-right: 18px;
  background: #6f94ea;
  color: #fff;
  font-size: 17px;
  display: flex;
  align-items: center;
  gap: 6px;
  padding-left: 6px;
  white-space: nowrap;
}
.merge-ic { width: 22px; height: 24px; flex: none; }

/* main */
.main { height: 833px; flex: none; display: flex; background: #f0f0f0; }
.rail { width: 33px; flex: none; padding-top: 42px; display: flex; flex-direction: column; align-items: center; }
.rail-tab {
  width: 34px;
  height: 45px;
  margin-right: -1px;
  background: #fff;
  border: 1px solid #aaa;
  border-left: 0;
  border-right: 0;
  display: flex;
  align-items: center;
  justify-content: center;
  position: relative;
}
.rail-ic { width: 18px; height: 22px; display: block; }
.rail-pages { margin-top: 12px; }
.rail-notes { margin-top: 25px; width: 22px; }
.bookmarks { width: 250px; flex: none; margin-right: 3px; display: flex; flex-direction: column; }
.bm-head {
  height: 25px;
  display: flex;
  justify-content: space-between;
  align-items: center;
  padding: 0 5px 0 3px;
  font-size: 13px;
  color: #555;
}
.bm-ctrl { font-size: 8px; color: #222; letter-spacing: -1px; display: flex; gap: 9px; }
.bm-panel { flex: 1; background: #fff; border-top: 1px solid #aaa; border-left: 1px solid #aaa; }
.bm-tools { height: 27px; display: flex; gap: 19px; padding: 5px 0 0 9px; }
.tree {
  margin: 0;
  padding: 0;
  list-style: none;
  background: repeating-linear-gradient(#888 0 1px, transparent 1px 2px) 10px 9px / 1px 297px no-repeat;
}
.node { height: 18px; display: flex; align-items: center; padding-left: 6px; white-space: nowrap; font-size: 12px; color: #222; }
.plus {
  width: 9px;
  height: 9px;
  flex: none;
  border: 1px solid #888;
  background:
    linear-gradient(#222, #222) center / 5px 1px no-repeat,
    linear-gradient(#222, #222) center / 1px 5px no-repeat,
    #fff;
  position: relative;
}
.plus::after {
  content: "";
  position: absolute;
  left: 8px;
  top: 3px;
  width: 9px;
  border-top: 1px dotted #888;
}
.plus-none { border-color: transparent; background: none; }
.bm { width: 9px; height: 17px; flex: none; margin: 0 6px 0 9px; }
.node-t { padding: 1px 2px; line-height: 16px; }
.node-sel { background: #e0e0e0; }

/* document */
.viewer {
  flex: none;
  width: 1618px;
  background: #aaa;
  padding-left: 217px;
  overflow: hidden;
}
.page {
  width: 1190px;
  height: 833px;
  background: #fff;
  border-left: 1px solid #444;
  border-right: 1px solid #444;
  overflow: hidden;
  color: #222;
  font: 20px "Liberation Sans", "Noto Sans CJK SC", sans-serif;
}
.dia { display: block; }
.d1 { width: 460px; height: 117px; margin: 0 0 15px 236px; }
.d2 { width: 420px; height: 165px; margin: -2px 0 0 256px; }
.d3 { width: 500px; height: 220px; margin: 5px 0 0 276px; }
.ln { margin: 0 0 0 178px; height: 34px; line-height: 34px; white-space: nowrap; }
.ln-a { margin-top: 1px; }
.ln-in { margin-left: 198px; }
.ln-2 { margin-top: 1px; }
.head { margin-left: 140px; }
.head b { font-weight: 700; margin-right: 10px; }
.h3 { margin-top: 11px; }
.num { display: inline-block; width: 37px; }
.wire path, .wire rect { fill: none; stroke: #333; stroke-width: 3; }
.wire .hole, .wire .hole-n { stroke: #444; }
.wire .hole { fill: #fff; }
.wire .hole-n { stroke: #555; }
.hole { fill: #fff; stroke: #444; stroke-width: 3; }
.solid { fill: #222; }
.thick { fill: none; stroke: #222; stroke-width: 5; }
.batt { fill: none; stroke: #222; stroke-width: 12; }
.t3 { font: 42px "Liberation Sans", "Noto Sans CJK SC", sans-serif; fill: #333; }
.ink { fill: none; stroke: #d5061e; stroke-width: 11; stroke-linecap: round; stroke-linejoin: round; }
.ink-b { stroke-width: 14; }
.ink-w { stroke-width: 12; }
.ink-m { stroke-width: 8; }
.ink-dot { fill: #d5061e; }
.ink-ring { fill: none; stroke: #d5061e; stroke-width: 11; }
.pen { stroke: #8a6bb0; stroke-width: 9; }
.pen-tip { stroke: #444; stroke-width: 3; }

/* vertical scrollbar */
.vscroll { width: 16px; flex: none; background: #fff; position: relative; }
.vs-top { display: block; height: 8px; border: 1px solid #888; background: #e8e8e8; }
.vs-thumb { display: block; height: 17px; margin-top: 92px; background: #cfcfcf; }
.vs-down { position: absolute; left: 2px; bottom: 4px; color: #666; font-size: 14px; line-height: 14px; }

/* status bar */
.status { height: 29px; flex: none; display: flex; align-items: center; background: #eee; }
.pager {
  margin-left: 771px;
  display: grid;
  grid-template-columns: 26px 23px 120px 25px 27px 26px 16px;
  align-items: center;
}
.combo {
  width: 114px;
  height: 19px;
  border: 1px solid #aaa;
  background: #fff;
  display: flex;
  align-items: center;
  justify-content: space-between;
  padding: 0 4px;
  font-size: 13px;
  color: #222;
}
.combo .caret { border-width: 3px 3px 0; }
.ic-faint { opacity: .7; }
/* the view buttons stay visible above the floating logo */
.zoombar {
  position: relative;
  z-index: 1;
  margin-left: auto;
  margin-right: 19px;
  display: grid;
  grid-template-columns: 23px 25px 27px 25px 78px 12px 14px 105px 14px;
  align-items: center;
}
.zoombar .ic { width: 14px; height: 14px; }
.zoombar .caret { border-width: 3px 3px 0; }
.vm { height: 19px; display: block; width: 100%; }
.vm-on { background: rgba(190, 210, 238, .85); }
.pct { padding-left: 25px; color: #444; }
.slider {
  height: 1px;
  margin: 0 6px 0 8px;
  background: #333;
  position: relative;
}
.slider-thumb { position: absolute; left: 47px; top: -5px; width: 5px; height: 11px; background: #333; }

.hscroll { height: 9px; flex: none; background: #fff; display: flex; overflow: hidden; }
.hs-left { margin-left: 11px; width: 322px; background: linear-gradient(90deg, #ececec, #e2e2e2); }
.hs-cut { margin: -8px 0 0 612px; width: 31px; font-size: 15px; line-height: 18px; color: #333; white-space: nowrap; }
.hs-right { margin-left: 610px; width: 324px; background: #e8e8e8; }

/* taskbar */
.taskbar {
  height: 31px;
  flex: none;
  display: flex;
  background: linear-gradient(90deg, #263a44, #233440 60%, #1e2f3f);
  color: #fff;
  overflow: hidden;
}
.start { width: 48px; display: flex; align-items: center; justify-content: center; padding-bottom: 8px; }
.win-logo { width: 16px; height: 16px; }
.ts-search {
  width: 344px;
  background: #f2f2f2;
  color: #333;
  font-size: 14px;
  display: flex;
  align-items: center;
  gap: 12px;
  padding: 0 0 7px 12px;
}
.ts-mag { width: 17px; height: 17px; }
.apps { display: flex; gap: 5px; padding-left: 5px; }
.app {
  width: 44px;
  height: 31px;
  display: flex;
  align-items: flex-start;
  justify-content: center;
  border-bottom: 3px solid #6ea8c9;
}
.app-on { background: #445a66; }
.app-ic { width: 24px; height: 23px; }
.calc { width: 18px; }
.tray {
  margin-left: auto;
  padding-right: 13px;
  display: grid;
  grid-template-columns: 30px 39px 74px 24px 23px 25px 24px 25px 22px 22px 28px 30px 78px 38px;
  grid-template-rows: 23px;
  align-items: center;
  font-size: 14px;
  color: #e8edf0;
  white-space: nowrap;
}
.sun { width: 18px; height: 19px; border-radius: 50%; background: linear-gradient(#fbd24e, #f0a63a); }
.t-c { text-align: center; }
.t-ic { width: 18px; height: 18px; display: block; justify-self: center; }
.pin {
  display: inline-block;
  width: 17px;
  height: 17px;
  background: #fff;
  color: #111;
  font-size: 13px;
  line-height: 16px;
}
.clock { align-self: start; height: 31px; display: flex; flex-direction: column; justify-content: flex-end; align-items: center; font-size: 13px; }
.clock span { line-height: 20px; flex: none; }
.notify { width: 18px; height: 18px; }

/* overlays */
.logo {
  position: absolute;
  left: 1587px;
  top: 928px;
  width: 96px;
  height: 96px;
  border-radius: 24px;
  background: #5f717f;
  box-shadow: 0 0 3px rgba(0, 0, 0, .3);
}
.logo-ic { width: 96px; height: 96px; display: block; }
.mark {
  position: absolute;
  left: 1702px;
  top: 950px;
  font-size: 41px;
  line-height: 56px;
  font-weight: 700;
  color: #dcdcdc;
  text-shadow: 1px 1px 3px rgba(0, 0, 0, .25);
  white-space: nowrap;
}
.topshadow {
  position: absolute;
  left: 1476px;
  top: 0;
  width: 284px;
  height: 1px;
  box-shadow: 0 1px 3px rgba(0, 0, 0, .6);
  background: #888;
}
```
